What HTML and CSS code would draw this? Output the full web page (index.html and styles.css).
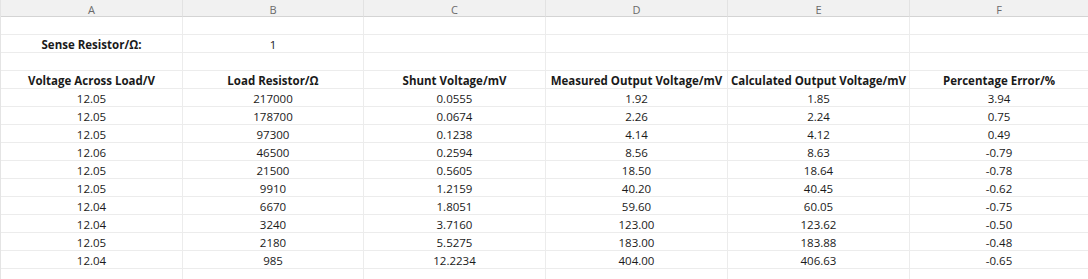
FILE: index.html
```html
<!DOCTYPE html>
<html>
<head>
<meta charset="utf-8">
<link rel="stylesheet" href="styles.css">
</head>
<body>
<div class="sheet">
  <div class="colhead">A</div><div class="colhead">B</div><div class="colhead">C</div><div class="colhead">D</div><div class="colhead">E</div><div class="colhead">F</div>

  <div class="c"></div><div class="c"></div><div class="c"></div><div class="c"></div><div class="c"></div><div class="c"></div>

  <div class="c b">Sense Resistor/Ω:</div><div class="c">1</div><div class="c"></div><div class="c"></div><div class="c"></div><div class="c"></div>

  <div class="c"></div><div class="c"></div><div class="c"></div><div class="c"></div><div class="c"></div><div class="c"></div>

  <div class="c b">Voltage Across Load/V</div><div class="c b">Load Resistor/Ω</div><div class="c b">Shunt Voltage/mV</div><div class="c b">Measured Output Voltage/mV</div><div class="c b">Calculated Output Voltage/mV</div><div class="c b">Percentage Error/%</div>

  <div class="c">12.05</div><div class="c">217000</div><div class="c">0.0555</div><div class="c">1.92</div><div class="c">1.85</div><div class="c">3.94</div>
  <div class="c">12.05</div><div class="c">178700</div><div class="c">0.0674</div><div class="c">2.26</div><div class="c">2.24</div><div class="c">0.75</div>
  <div class="c">12.05</div><div class="c">97300</div><div class="c">0.1238</div><div class="c">4.14</div><div class="c">4.12</div><div class="c">0.49</div>
  <div class="c">12.06</div><div class="c">46500</div><div class="c">0.2594</div><div class="c">8.56</div><div class="c">8.63</div><div class="c">-0.79</div>
  <div class="c">12.05</div><div class="c">21500</div><div class="c">0.5605</div><div class="c">18.50</div><div class="c">18.64</div><div class="c">-0.78</div>
  <div class="c">12.05</div><div class="c">9910</div><div class="c">1.2159</div><div class="c">40.20</div><div class="c">40.45</div><div class="c">-0.62</div>
  <div class="c">12.04</div><div class="c">6670</div><div class="c">1.8051</div><div class="c">59.60</div><div class="c">60.05</div><div class="c">-0.75</div>
  <div class="c">12.04</div><div class="c">3240</div><div class="c">3.7160</div><div class="c">123.00</div><div class="c">123.62</div><div class="c">-0.50</div>
  <div class="c">12.05</div><div class="c">2180</div><div class="c">5.5275</div><div class="c">183.00</div><div class="c">183.88</div><div class="c">-0.48</div>
  <div class="c">12.04</div><div class="c">985</div><div class="c">12.2234</div><div class="c">404.00</div><div class="c">406.63</div><div class="c">-0.65</div>

  <div class="c"></div><div class="c"></div><div class="c"></div><div class="c"></div><div class="c"></div><div class="c"></div>
</div>
</body>
</html>
```
FILE: styles.css
```css
html, body {
  margin: 0;
  padding: 0;
  background: #ffffff;
}
.sheet {
  display: grid;
  grid-template-columns: 182px 181px 182px 182px 182px 179px;
  grid-template-rows: 17px repeat(15, 18px);
  font-family: "Open Sans", "Liberation Sans", sans-serif;
  font-size: 11.5px;
  color: #1a1a1a;
  border-left: 1px solid #e4e4e4;
}
.colhead {
  background: #f1f1f1;
  border-bottom: 1px solid #d4d4d4;
  border-right: 1px solid #e2e2e2;
  color: #6a6a6a;
  font-size: 11px;
  display: flex;
  align-items: center;
  justify-content: center;
  padding-top: 2px;
  box-sizing: border-box;
}
.c {
  border-right: 1px solid #ececec;
  border-bottom: 1px solid #ececec;
  display: flex;
  align-items: flex-end;
  justify-content: center;
  padding-bottom: 0;
  white-space: nowrap;
  line-height: 14px;
  box-sizing: border-box;
}
.b {
  font-weight: 700;
}
```
